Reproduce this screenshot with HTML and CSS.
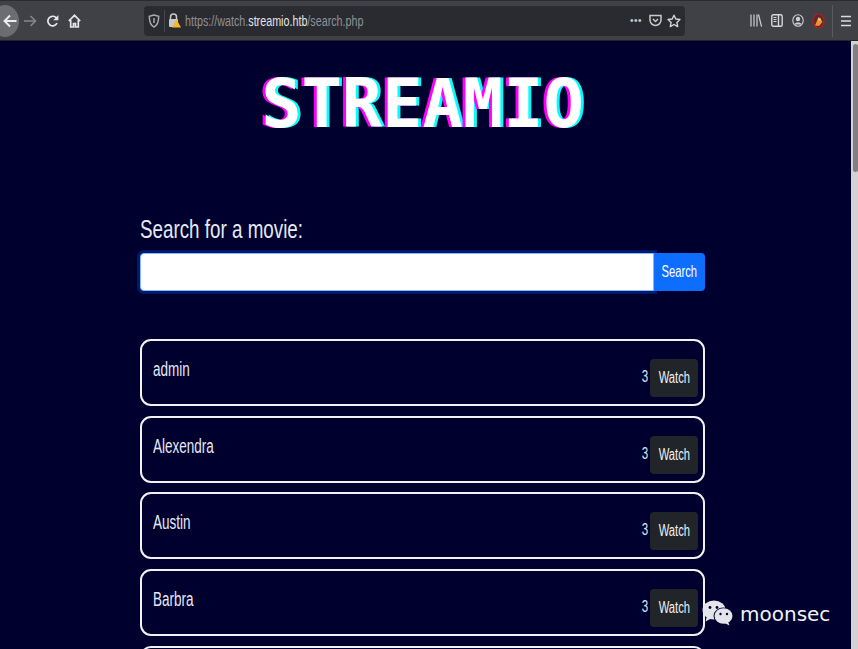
FILE: index.html
```html
<!DOCTYPE html>
<html lang="en">
<head>
<meta charset="utf-8">
<title>Streamio</title>
<link rel="stylesheet" href="styles.css">
</head>
<body>
<header class="toolbar">
  <nav class="nav">
    <span class="back"><svg width="16" height="16" viewBox="0 0 16 16"><path d="M14.500 8H2.500M8 2.500 2.500 8 8 13.500" fill="none" stroke="#eceded" stroke-width="1.900"/></svg></span>
    <svg class="ico fwd" width="14" height="14" viewBox="0 0 14 14"><path d="M1 7h11.500M7.500 2l5 5-5 5" fill="none" stroke="#85868a" stroke-width="1.600"/></svg>
    <svg class="ico reload" width="13" height="14" viewBox="0 0 13 14"><path d="M11 9.200A4.800 4.800 0 1 1 9.800 3.400L11.400 5" fill="none" stroke="#e6e6e8" stroke-width="1.700"/><path d="M12.400 1v5.200H7.200z" fill="#e6e6e8"/></svg>
    <svg class="ico home" width="13" height="14" viewBox="0 0 13 14"><path d="M.8 7 6.500 1.300 12.200 7M2.700 6v7h2.800V9.500h2V13h2.800V6" fill="none" stroke="#e6e6e8" stroke-width="1.700"/></svg>
  </nav>
  <div class="urlbar">
    <svg class="ico shield" width="12" height="14" viewBox="0 0 12 14"><path d="M6 1 1.300 2.300c0 5 .7 8.700 4.700 10.700 4-2 4.700-5.700 4.700-10.700z" fill="none" stroke="#a9aaae" stroke-width="1.500"/><path d="M6 4v5" stroke="#a9aaae" stroke-width="1.500"/></svg>
    <span class="sep"></span>
    <svg class="ico lock" width="13" height="15" viewBox="0 0 13 15"><path d="M2.500 6V4a3 3 0 0 1 6 0v2" fill="none" stroke="#c9c9cc" stroke-width="1.500"/><rect x="1" y="6" width="9" height="8" rx="1" fill="#c9c9cc"/><path d="M8.500 6.500 13 14.500H4z" fill="#f6b826"/></svg>
    <span class="url"><span class="narrow-url">https://watch.<b>streamio.htb</b>/search.php</span></span>
    <span class="dots">•••</span>
    <svg class="ico pocket" width="13" height="13" viewBox="0 0 13 13"><path d="M1 1.500h11V6a5.500 5.500 0 0 1-11 0z" fill="none" stroke="#c9c9cc" stroke-width="1.500"/><path d="M4 5l2.500 2.500L9 5" fill="none" stroke="#c9c9cc" stroke-width="1.500"/></svg>
    <svg class="ico star" width="14" height="14" viewBox="0 0 14 14"><path d="M7 1.200 8.800 5l4.200.500-3.100 2.900.8 4.200L7 10.500 3.300 12.600l.8-4.200L1 5.500 5.200 5z" fill="none" stroke="#d4d4d6" stroke-width="1.400" stroke-linejoin="round"/></svg>
  </div>
  <div class="tools">
    <svg class="ico lib" width="12" height="13" viewBox="0 0 12 13"><path d="M1 .5v12M4 .5v12M7 .5v12M8.500 .5l3 12" stroke="#cfcfd2" stroke-width="1.200" fill="none"/></svg>
    <svg class="ico side" width="12" height="13" viewBox="0 0 12 13"><rect x=".8" y=".8" width="10.400" height="11.400" rx="1.500" fill="none" stroke="#d6d6d8" stroke-width="1.400"/><path d="M7.500 1v11" stroke="#d6d6d8" stroke-width="1.400"/><path d="M2.500 3.500h3M2.500 5.500h3M2.500 7.500h3" stroke="#d6d6d8"/></svg>
    <svg class="ico acct" width="12" height="13" viewBox="0 0 12 13"><ellipse cx="6" cy="6.500" rx="5.200" ry="5.700" fill="none" stroke="#cfcfd2" stroke-width="1.100"/><circle cx="6" cy="5" r="2.200" fill="#cfcfd2"/><path d="M2.500 10.500c.5-2.600 6.500-2.600 7 0z" fill="#cfcfd2"/></svg>
    <svg class="ico ext" width="13" height="16" viewBox="0 0 13 16"><ellipse cx="6.500" cy="8" rx="5.500" ry="7" fill="#5a2a30" stroke="#c01818" stroke-width="1.200"/><path d="M3 12.500 6.500 4l2.500 2.500 1.500 2.500-3.500 4z" fill="#f0922e"/><circle cx="7.500" cy="6.500" r="1.400" fill="#f2c96a"/></svg>
    <span class="divider"></span>
    <svg class="ico menu" width="12" height="12" viewBox="0 0 12 12"><path d="M1 1.500h10M1 6h10M1 10.500h10" stroke="#dcdcde" stroke-width="1.700"/></svg>
  </div>
</header>

<div class="viewport">
  <main class="page">
    <h1 class="logo">STREAMIO</h1>
    <h2 class="label"><span class="narrow">Search for a movie:</span></h2>
    <form class="search">
      <input class="field" type="text" aria-label="Search">
      <button class="go" type="button"><span class="narrow-c">Search</span></button>
    </form>
    <ul class="list">
      <li class="card"><span class="name">admin</span><span class="count">3</span><button class="watch" type="button"><span class="narrow-c">Watch</span></button></li>
      <li class="card"><span class="name">Alexendra</span><span class="count">3</span><button class="watch" type="button"><span class="narrow-c">Watch</span></button></li>
      <li class="card"><span class="name">Austin</span><span class="count">3</span><button class="watch" type="button"><span class="narrow-c">Watch</span></button></li>
      <li class="card"><span class="name">Barbra</span><span class="count">3</span><button class="watch" type="button"><span class="narrow-c">Watch</span></button></li>
      <li class="card"></li>
    </ul>
  </main>
  <div class="scrollbar"><span class="thumb"></span></div>
</div>

<div class="mark">
  <svg width="32" height="26" viewBox="0 0 32 26"><ellipse cx="12" cy="10" rx="11.500" ry="9.500" fill="#e4e4ea"/><path d="M5 16 3.500 21.500 10 18z" fill="#e4e4ea"/><ellipse cx="21.500" cy="16" rx="10" ry="8.500" fill="#00002e"/><ellipse cx="21.500" cy="16" rx="9" ry="7.800" fill="#e4e4ea"/><path d="M26 21.500 27.500 25.500 22.500 23z" fill="#e4e4ea"/><circle cx="8" cy="7.500" r="1.400" fill="#00002e"/><circle cx="15" cy="7.500" r="1.400" fill="#00002e"/><circle cx="18.500" cy="14" r="1.200" fill="#00002e"/><circle cx="25" cy="14" r="1.200" fill="#00002e"/></svg>
  <span class="mark-text">moonsec</span>
</div>
</body>
</html>
```

FILE: styles.css
```css
* { box-sizing: border-box; }
html, body { margin: 0; height: 100%; overflow: hidden; }
body {
  position: relative;
  background: #00002e;
  font-family: "Liberation Sans", Arial, sans-serif;
  color: #e6e8f5;
}

/* browser chrome */
.toolbar {
  height: 41px;
  display: flex;
  align-items: center;
  background: #3f4147;
  border-top: 1px solid #2b2c31;
  border-bottom: 1px solid #24252a;
}
.ico { display: block; flex: none; }
.nav { width: 144px; flex: none; display: flex; align-items: center; }
.back {
  width: 28px; height: 32px; margin-left: -9px;
  padding-left: 11px;
  display: flex; align-items: center;
  border-radius: 50%;
  background: #6c6d71;
}
.fwd { margin-left: 4px; }
.reload { margin-left: 9px; }
.home { margin-left: 9px; }

.urlbar {
  width: 541px; height: 30px; flex: none;
  display: flex; align-items: center;
  background: #2a2b31;
  border-radius: 4px;
  padding-left: 4px;
}
.sep { width: 1px; height: 22px; background: #46474c; margin-left: 4px; }
.lock { margin-left: 3px; }
.url { flex: 1; margin-left: 4px; overflow: hidden; white-space: nowrap; font-size: 14px; color: #8f9096; }
.narrow-url { display: inline-block; transform: scaleX(.767); transform-origin: left center; }
.url b { font-weight: 400; color: #e4e4e8; }
.dots { font-size: 10px; color: #c9c9cc; letter-spacing: .5px; margin-right: 7px; }
.pocket { margin-right: 5px; }
.star { margin-right: 4px; }

.tools { flex: 1; display: flex; align-items: center; padding-left: 65px; }
.side { margin-left: 9px; }
.acct { margin-left: 9px; }
.ext { margin-left: 8px; }
.divider { width: 1px; height: 32px; background: #5a5b60; margin-left: 7px; }
.menu { margin-left: 7px; }

/* page */
.viewport { display: flex; height: 608px; overflow: hidden; }
.page { flex: 1; padding: 0 146px 0 140px; min-width: 0; }
.scrollbar { width: 7px; flex: none; background: #d2d2d2; padding: 3px 0 0 2px; }
.thumb { display: block; width: 5px; height: 128px; border-radius: 3px; background: #808080; }

.logo {
  margin: 23px 0 0;
  height: 80px;
  text-align: center;
  font: 700 67px/80px "DejaVu Sans Mono", monospace;
  color: #fff;
  text-shadow: -3px 0 #ff00ff, 3px 0 #00ffff;
}
.narrow { display: inline-block; transform: scaleX(.752); transform-origin: left center; white-space: nowrap; }
.narrow-c { display: inline-block; transform: scaleX(.7); transform-origin: center; white-space: nowrap; }

.label { margin: 66px 0 0; height: 38px; font-size: 25px; line-height: 38px; font-weight: 400; color: #e6e8f5; }

.search { display: flex; height: 38px; margin-top: 5px; }
.field {
  flex: 1; min-width: 0; height: 38px;
  background: #fff;
  border: 1px solid #86b7fe;
  border-radius: 4px 0 0 4px;
  outline: 0;
  box-shadow: 0 0 0 3px #001a6e;
}
.go {
  width: 51px; height: 38px; padding: 0;
  border: 0; border-radius: 0 4px 4px 0;
  background: #0d6efd; color: #fff;
  font: 16px "Liberation Sans", Arial, sans-serif;
  white-space: nowrap; overflow: hidden;
}

.list { list-style: none; margin: 48px 0 0; padding: 0; display: flex; flex-direction: column; gap: 9.700px; }
.card {
  height: 67px; flex: none;
  display: flex; align-items: flex-end;
  border: 2px solid #f1f1f6;
  border-radius: 11px;
  padding: 0 5px 7px 11px;
}
.name {
  align-self: flex-start; margin-top: 16px;
  font-size: 20px; line-height: 24px;
  white-space: nowrap;
  transform: scaleX(.675); transform-origin: left center;
}
.count {
  align-self: flex-start; margin: 26px 3px 0 auto;
  width: 6px;
  font-size: 16px; line-height: 20px;
  transform: scaleX(.72);
  color: #dfe2f2;
}
.watch {
  width: 48px; height: 38px; padding: 0; flex: none;
  border: 0; border-radius: 4px;
  background: #212529; color: #f0f0f0;
  font: 16px "Liberation Sans", Arial, sans-serif;
  overflow: hidden;
}

/* watermark */
.mark {
  position: absolute; left: 702px; top: 599px;
  display: flex; align-items: center; gap: 6px;
}
.mark-text { font: 20px "DejaVu Sans", sans-serif; color: #f2f2f5; margin-top: 3px; }
```
